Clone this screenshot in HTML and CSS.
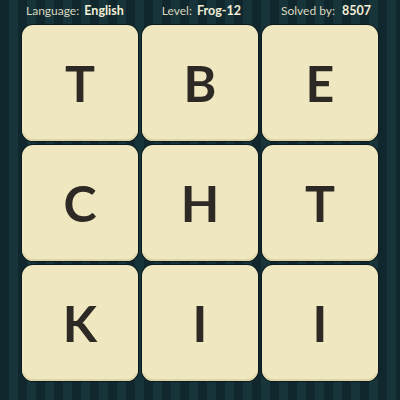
FILE: index.html
```html
<!DOCTYPE html>
<html>
<head>
<meta charset="utf-8">
<link rel="stylesheet" href="styles.css">
</head>
<body>
<div class="page">
  <div class="header">
    <span class="item item-lang">Language: <b>English</b></span>
    <span class="item item-level">Level: <b>Frog-12</b></span>
    <span class="item item-solved">Solved by: <b>8507</b></span>
  </div>
  <div class="grid">
    <div class="tile">T</div>
    <div class="tile">B</div>
    <div class="tile">E</div>
    <div class="tile">C</div>
    <div class="tile">H</div>
    <div class="tile">T</div>
    <div class="tile">K</div>
    <div class="tile">I</div>
    <div class="tile">I</div>
  </div>
</div>
</body>
</html>
```
FILE: styles.css
```css
html, body {
  margin: 0;
  padding: 0;
}
body {
  width: 400px;
  height: 400px;
  overflow: hidden;
  background-color: #132c33;
  background-image: repeating-linear-gradient(90deg, #11272e 0px, #11272e 9px, #16343a 9px, #16343a 18px);
  font-family: Lato, "Open Sans", sans-serif;
}
.page {
  display: flex;
  flex-direction: column;
}
.header {
  height: 25px;
  box-sizing: border-box;
  padding-top: 3px;
  display: flex;
  align-items: flex-start;
  color: #d9d6bd;
  font-size: 12px;
  line-height: 16px;
  padding-left: 26px;
}
.header b {
  color: #f3efd6;
  font-weight: 700;
  margin-left: 2px;
  font-size: 12.5px;
}
.item-level {
  margin-left: 38px;
}
.item-solved {
  margin-left: 40px;
}
.item-solved b {
  margin-left: 4px;
}
.grid {
  margin-left: 22px;
  display: grid;
  grid-template-columns: repeat(3, 116px);
  grid-template-rows: repeat(3, 116px);
  gap: 4px;
}
.tile {
  background: #efe7bf;
  border-radius: 11px;
  box-shadow: 0 0 0 1px #0b1a1e, inset 0 -2px 0 #ddd3a6;
  display: flex;
  align-items: center;
  justify-content: center;
  font-size: 50px;
  font-weight: 700;
  color: #2d2924;
}
```
